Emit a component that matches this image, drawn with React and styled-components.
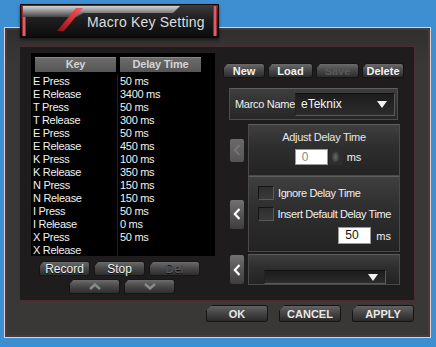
import React from "react";
import styled, { createGlobalStyle } from "styled-components";

const FONT = `"Liberation Sans", Arial, sans-serif`;

const GlobalStyle = createGlobalStyle`
  html, body {
    margin: 0;
    padding: 0;
    background: #3d8fd1;
    font-family: ${FONT};
  }
`;

const steps = [
  ["E Press", "50 ms"],
  ["E Release", "3400 ms"],
  ["T Press", "50 ms"],
  ["T Release", "300 ms"],
  ["E Press", "50 ms"],
  ["E Release", "450 ms"],
  ["K Press", "100 ms"],
  ["K Release", "350 ms"],
  ["N Press", "150 ms"],
  ["N Release", "150 ms"],
  ["I Press", "50 ms"],
  ["I Release", "0 ms"],
  ["X Press", "50 ms"],
  ["X Release", ""],
];

export default function App() {
  return (
    <Page>
      <GlobalStyle />
      <TitleTab>
        <TabShine width="199" height="34" viewBox="0 0 199 34">
          <defs>
            <linearGradient id="shine" x1="0" y1="0" x2="0" y2="1">
              <stop offset="0" stopColor="#d6d6d6" />
              <stop offset="0.5" stopColor="#8d8d8d" />
              <stop offset="1" stopColor="#444" />
            </linearGradient>
          </defs>
          <polygon points="2,1 159,1 152,8 62,8 56,12 2,12" fill="url(#shine)" />
        </TabShine>
        <Slash width="26" height="23" viewBox="0 0 26 23">
          <defs>
            <linearGradient id="red" x1="0" y1="1" x2="1" y2="0">
              <stop offset="0" stopColor="#8c1016" />
              <stop offset="0.6" stopColor="#e0343c" />
              <stop offset="1" stopColor="#f0606a" />
            </linearGradient>
          </defs>
          <polygon points="0,23 7,23 26,0 19,0" fill="url(#red)" />
        </Slash>
        <TabTitle>Macro Key Setting</TabTitle>
      </TitleTab>

      <Window>
        <InnerPanel>
          <LeftColumn>
            <ListBox>
              <ListHeader>
                <HeaderCell>Key</HeaderCell>
                <HeaderCell>Delay Time</HeaderCell>
              </ListHeader>
              <ListRows>
                {steps.map(([key, delay], i) => (
                  <ListRow key={i}>
                    <span>{key}</span>
                    <span>{delay}</span>
                  </ListRow>
                ))}
              </ListRows>
            </ListBox>
            <ButtonRow>
              <SmallButton>Record</SmallButton>
              <SmallButton>Stop</SmallButton>
              <SmallButton $disabled>Del</SmallButton>
            </ButtonRow>
            <ButtonRow $tight>
              <SmallButton>
                <svg width="12" height="7" viewBox="0 0 12 7">
                  <polyline points="1,6 6,1.5 11,6" fill="none" stroke="#8a8a8a" strokeWidth="2.4" />
                </svg>
              </SmallButton>
              <SmallButton>
                <svg width="12" height="7" viewBox="0 0 12 7">
                  <polyline points="1,1 6,5.5 11,1" fill="none" stroke="#8a8a8a" strokeWidth="2.4" />
                </svg>
              </SmallButton>
            </ButtonRow>
          </LeftColumn>

          <RightColumn>
            <TopButtons>
              <TopButton $w={42}>New</TopButton>
              <TopButton $w={45}>Load</TopButton>
              <TopButton $w={43} $disabled>Save</TopButton>
              <TopButton $w={42}>Delete</TopButton>
            </TopButtons>

            <NameBox>
              <NameLabel>Marco Name</NameLabel>
              <Select $w={102} $h={23}>
                <SelectText>eTeknix</SelectText>
                <DownTriangle />
              </Select>
            </NameBox>

            <SettingRow $first>
              <SideButton $h={25} $disabled>
                <Chevron />
              </SideButton>
              <SettingPanel $h={52}>
                <PanelTitle>Adjust Delay Time</PanelTitle>
                <InputLine>
                  <NumberField $muted>0</NumberField>
                  <Spinner />
                  <Unit>ms</Unit>
                </InputLine>
              </SettingPanel>
            </SettingRow>

            <SettingRow>
              <SideButton $h={31}>
                <Chevron />
              </SideButton>
              <SettingPanel $h={76} $left>
                <CheckLine>
                  <CheckBox />
                  <CheckLabel>Ignore Delay Time</CheckLabel>
                </CheckLine>
                <CheckLine>
                  <CheckBox />
                  <CheckLabel>Insert Default Delay Time</CheckLabel>
                </CheckLine>
                <DefaultLine>
                  <NumberField>50</NumberField>
                  <Unit>ms</Unit>
                </DefaultLine>
              </SettingPanel>
            </SettingRow>

            <SettingRow $gap>
              <SideButton $h={31}>
                <Chevron />
              </SideButton>
              <SettingPanel $h={31} $left>
                <Select $w={122} $h={19}>
                  <SelectText />
                  <DownTriangle />
                </Select>
              </SettingPanel>
            </SettingRow>
          </RightColumn>
        </InnerPanel>

        <Footer>
          <FooterButton>OK</FooterButton>
          <FooterButton>CANCEL</FooterButton>
          <FooterButton>APPLY</FooterButton>
        </Footer>
      </Window>
    </Page>
  );
}

function Chevron() {
  return (
    <svg width="8" height="12" viewBox="0 0 8 12">
      <polyline points="6.5,1 1.8,6 6.5,11" fill="none" stroke="#fff" strokeWidth="2.2" />
    </svg>
  );
}

function DownTriangle() {
  return (
    <svg width="10" height="7" viewBox="0 0 10 7">
      <polygon points="0,0 10,0 5,7" fill="#f2f2f2" />
    </svg>
  );
}

const Page = styled.div`
  width: 436px;
  height: 347px;
  box-sizing: border-box;
  padding: 4px 0 0 4px;
  overflow: hidden;
`;

const TitleTab = styled.div`
  position: relative;
  z-index: 2;
  width: 199px;
  height: 34px;
  margin-left: 16px;
  box-sizing: border-box;
  display: flex;
  align-items: flex-end;
  padding: 0 0 4px 36px;
  background: linear-gradient(180deg, #3c3c3c 0%, #1e1e1e 45%, #0c0c0c 100%);
  border: 1px solid #0a0a0a;
  box-shadow: 0 2px 3px rgba(0, 0, 0, 0.5);

  &::before,
  &::after {
    content: "";
    position: absolute;
    top: 1px;
    bottom: 1px;
    width: 4px;
    background: linear-gradient(90deg, #7a0e14, #f07a82 50%, #8a141a);
  }
  &::before {
    left: 1px;
  }
  &::after {
    right: 1px;
  }
`;

const TabShine = styled.svg`
  position: absolute;
  left: 0;
  top: 0;
`;

const Slash = styled.svg`
  position: relative;
  flex: none;
  margin-bottom: 2px;
`;

const TabTitle = styled.span`
  position: relative;
  margin-left: 4px;
  margin-bottom: 3px;
  font-size: 14px;
  color: #dedede;
  letter-spacing: 0.2px;
`;

const Window = styled.div`
  position: relative;
  z-index: 1;
  margin-top: -11px;
  width: 427px;
  height: 311px;
  box-sizing: border-box;
  padding: 18px 15px 0 14px;
  background: linear-gradient(180deg, #312e2e 0%, #3a3737 12%, #3a3737 100%);
  border: 1px solid #dcd2d4;
  box-shadow: inset 0 0 0 2px #463a3d;
  display: flex;
  flex-direction: column;
`;

const InnerPanel = styled.div`
  height: 255px;
  box-sizing: border-box;
  border: 1px solid #4c2c32;
  background: #1e1c1c;
  display: flex;
  align-items: flex-start;
  padding: 6px 0 0 11px;
`;

const LeftColumn = styled.div`
  width: 184px;
  display: flex;
  flex-direction: column;
`;

const ListBox = styled.div`
  height: 203px;
  box-sizing: border-box;
  background: #000;
  padding: 4px 0 0 2px;
  display: flex;
  flex-direction: column;
`;

const ListHeader = styled.div`
  display: grid;
  grid-template-columns: 81px 81px;
  gap: 4px;
  margin-left: 2px;
  margin-bottom: 2px;
`;

const HeaderCell = styled.div`
  height: 15px;
  line-height: 15px;
  text-align: center;
  font-size: 11px;
  font-weight: bold;
  letter-spacing: -0.2px;
  color: #d4d4d4;
  background: linear-gradient(180deg, #6e6e6e 0%, #555 100%);
  box-shadow: inset 0 1px 0 #888;
`;

const ListRows = styled.div`
  flex: 1;
  background: linear-gradient(
    90deg,
    transparent 84px,
    #1e1e1e 84px,
    #1e1e1e 85px,
    transparent 85px
  );
`;

const ListRow = styled.div`
  display: grid;
  grid-template-columns: 87px 1fr;
  height: 13px;
  line-height: 14px;
  font-size: 11px;
  letter-spacing: -0.3px;
  color: #f2f2f2;
  white-space: nowrap;
`;

const ButtonRow = styled.div`
  display: flex;
  gap: 4px;
  padding-left: ${({ $tight }) => ($tight ? "38px" : "8px")};
  margin-top: ${({ $tight }) => ($tight ? "3px" : "5px")};
`;

const SmallButton = styled.div`
  width: 51px;
  height: 15px;
  box-sizing: border-box;
  display: flex;
  align-items: center;
  justify-content: center;
  font-size: 12px;
  color: ${({ $disabled }) => ($disabled ? "#5e5e5e" : "#f0f0f0")};
  background: linear-gradient(180deg, #6c6c6c 0%, #4a4a4a 45%, #2e2e2e 100%);
  border: 1px solid #161616;
  border-radius: 0 3px 3px 2px;
  clip-path: polygon(5px 0, 100% 0, 100% 100%, 0 100%, 0 6px);
  text-shadow: 0 1px 0 #111;
`;

const RightColumn = styled.div`
  margin-left: 8px;
  margin-top: 10px;
  width: 182px;
  display: flex;
  flex-direction: column;
`;

const TopButtons = styled.div`
  display: flex;
  gap: 3px;
`;

const TopButton = styled.div`
  width: ${({ $w }) => $w}px;
  height: 15px;
  box-sizing: border-box;
  display: flex;
  align-items: center;
  justify-content: center;
  font-size: 11px;
  font-weight: bold;
  color: ${({ $disabled }) => ($disabled ? "#5a5a5a" : "#f2f2f2")};
  background: linear-gradient(180deg, #6a6a6a 0%, #474747 50%, #2c2c2c 100%);
  border: 1px solid #151515;
  border-radius: 0 3px 3px 2px;
  clip-path: polygon(5px 0, 100% 0, 100% 100%, 0 100%, 0 6px);
`;

const NameBox = styled.div`
  margin: 10px 0 0 6px;
  width: 169px;
  height: 32px;
  box-sizing: border-box;
  display: flex;
  align-items: center;
  justify-content: space-between;
  padding: 0 2px 0 5px;
  background: linear-gradient(180deg, #3e3e3e 0%, #262626 100%);
  border: 1px solid #4e4e4e;
  border-top-color: #5e5e5e;
`;

const NameLabel = styled.span`
  font-size: 11px;
  letter-spacing: -0.3px;
  white-space: nowrap;
  color: #f0f0f0;
`;

const Select = styled.div`
  width: ${({ $w }) => $w}px;
  height: ${({ $h }) => $h}px;
  box-sizing: border-box;
  display: flex;
  align-items: center;
  justify-content: space-between;
  padding: 0 7px 0 5px;
  background: linear-gradient(180deg, #1c1c1c 0%, #2c2c2c 100%);
  border: 1px solid #5a5a5a;
  border-top-color: #111;
  border-left-color: #222;
`;

const SelectText = styled.span`
  font-size: 12px;
  color: #f4f4f4;
`;

const SettingRow = styled.div`
  display: flex;
  align-items: ${({ $gap }) => ($gap ? "stretch" : "center")};
  gap: 3px;
  margin-left: 6px;
  margin-top: ${({ $first, $gap }) => ($first ? "4px" : $gap ? "2px" : "0")};
`;

const SideButton = styled.div`
  width: 16px;
  height: ${({ $h }) => $h}px;
  box-sizing: border-box;
  display: flex;
  align-items: center;
  justify-content: center;
  border-radius: 3px;
  border: 1px solid #1e1e1e;
  background: ${({ $disabled }) =>
    $disabled
      ? "linear-gradient(180deg, #6a6a6a 0%, #555 100%)"
      : "linear-gradient(180deg, #727272 0%, #555 50%, #3e3e3e 100%)"};
  svg {
    opacity: ${({ $disabled }) => ($disabled ? 0.12 : 1)};
  }
`;

const SettingPanel = styled.div`
  width: 152px;
  height: ${({ $h }) => $h}px;
  box-sizing: border-box;
  display: flex;
  flex-direction: column;
  align-items: ${({ $left }) => ($left ? "stretch" : "center")};
  padding: ${({ $left }) => ($left ? "9px 8px 0 9px" : "6px 0 0")};
  background: linear-gradient(180deg, #3f3f3f 0%, #2f2f2f 40%, #232323 100%);
  border: 1px solid #4a4a4a;
  border-top-color: #5e5e5e;

  & > ${Select} {
    margin: 6px 0 0 6px;
  }
`;

const PanelTitle = styled.div`
  font-size: 11px;
  letter-spacing: -0.3px;
  color: #e6e6e6;
  line-height: 13px;
`;

const InputLine = styled.div`
  display: flex;
  align-items: center;
  margin-top: 5px;
  margin-left: 8px;
`;

const NumberField = styled.div`
  width: 33px;
  height: 16px;
  box-sizing: border-box;
  background: #fff;
  border: 1px solid #9a9a9a;
  font-size: 12px;
  line-height: 14px;
  padding-left: 6px;
  color: ${({ $muted }) => ($muted ? "#8a8a8a" : "#111")};
`;

const Spinner = styled.div`
  width: 13px;
  height: 16px;
  background: radial-gradient(ellipse 4px 6px at 50% 50%, #6a6a6a 0%, #444 70%, #2e2e2e 100%);
  border-left: 1px solid #222;
`;

const Unit = styled.span`
  margin-left: 5px;
  font-size: 11px;
  color: #f0f0f0;
`;

const CheckLine = styled.div`
  display: flex;
  align-items: center;
  gap: 4px;
  height: 14px;
  margin-bottom: 7px;
`;

const CheckBox = styled.div`
  width: 16px;
  height: 14px;
  box-sizing: border-box;
  background: linear-gradient(180deg, #2e2e2e, #3a3a3a);
  border: 1px solid #5a5a5a;
  border-top-color: #151515;
  border-left-color: #151515;
`;

const CheckLabel = styled.span`
  font-size: 11px;
  letter-spacing: -0.4px;
  white-space: nowrap;
  color: #f0f0f0;
`;

const DefaultLine = styled.div`
  display: flex;
  align-items: center;
  justify-content: flex-end;
  margin-top: -1px;

  ${NumberField} {
    height: 17px;
    line-height: 15px;
  }
`;

const Footer = styled.div`
  display: flex;
  justify-content: flex-end;
  gap: 11px;
  margin-top: 4px;
  padding-right: 1px;
`;

const FooterButton = styled.div`
  width: 62px;
  height: 17px;
  box-sizing: border-box;
  display: flex;
  align-items: center;
  justify-content: center;
  font-size: 11px;
  font-weight: bold;
  color: #e8e8e8;
  background: linear-gradient(180deg, #626262 0%, #444 50%, #2a2a2a 100%);
  border: 1px solid #141414;
  border-radius: 0 3px 3px 2px;
  clip-path: polygon(6px 0, 100% 0, 100% 100%, 0 100%, 0 6px);
`;
